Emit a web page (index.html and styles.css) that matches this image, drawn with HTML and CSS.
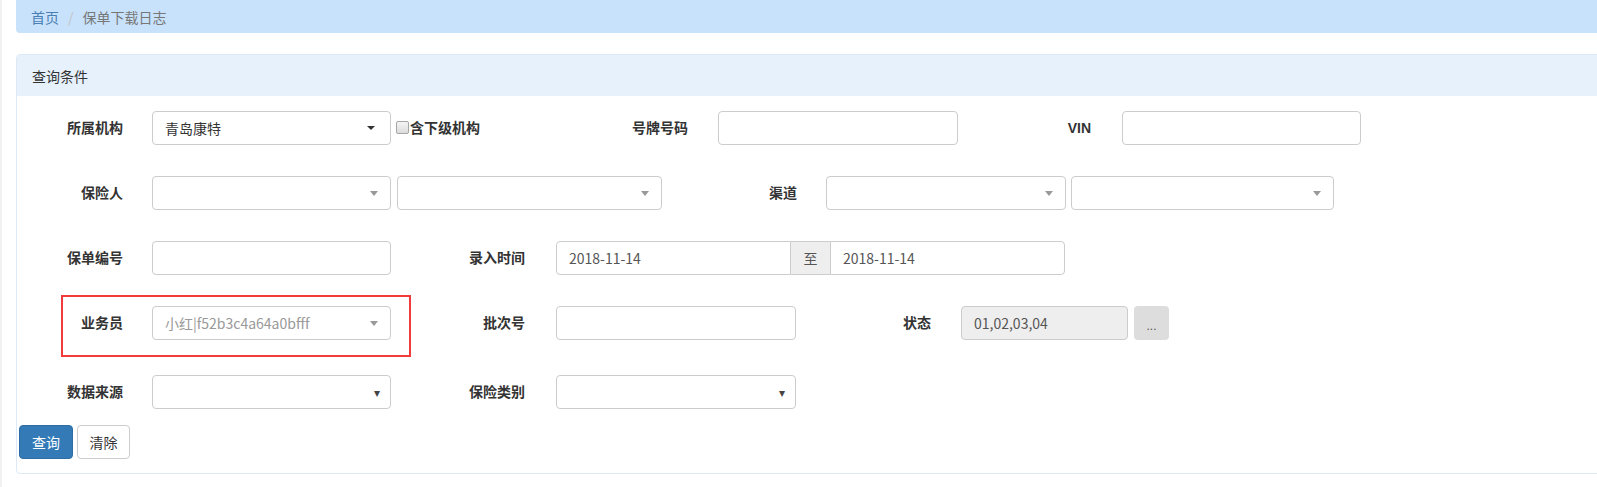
FILE: index.html
```html
<!DOCTYPE html>
<html lang="zh-CN">
<head>
<meta charset="utf-8">
<title>保单下载日志</title>
<link rel="stylesheet" href="styles.css">
</head>
<body>
<div class="page">
  <ol class="breadcrumb">
    <li class="crumb-link">首页</li>
    <li class="crumb-sep">/</li>
    <li class="crumb-active">保单下载日志</li>
  </ol>

  <div class="panel">
    <div class="panel-heading">查询条件</div>
    <div class="panel-body">

      <div class="row">
        <label class="lbl lbl-first">所属机构</label>
        <div class="ctrl sel w239"><span class="val dark-text">青岛康特</span><span class="caret caret-dark"></span></div>
        <label class="chk"><span class="chk-box"></span>含下级机构</label>
        <label class="lbl lw208 mr30">号牌号码</label>
        <input class="ctrl w240" type="text">
        <label class="lbl lw133 mr31">VIN</label>
        <input class="ctrl w239" type="text">
      </div>

      <div class="row">
        <label class="lbl lbl-first">保险人</label>
        <div class="ctrl sel w239"><span class="val"></span><span class="caret caret-gray"></span></div>
        <div class="ctrl sel w265 ml6"><span class="val"></span><span class="caret caret-gray"></span></div>
        <label class="lbl lw135 mr29">渠道</label>
        <div class="ctrl sel w240"><span class="val"></span><span class="caret caret-gray"></span></div>
        <div class="ctrl sel w263 ml5"><span class="val"></span><span class="caret caret-gray"></span></div>
      </div>

      <div class="row">
        <label class="lbl lbl-first">保单编号</label>
        <input class="ctrl w239" type="text">
        <label class="lbl lw134 mr31">录入时间</label>
        <div class="input-group">
          <input class="ctrl gi-left" type="text" value="2018-11-14">
          <span class="addon">至</span>
          <input class="ctrl gi-right" type="text" value="2018-11-14">
        </div>
      </div>

      <div class="row row-marked">
        <label class="lbl lbl-first">业务员</label>
        <div class="ctrl sel w239"><span class="val muted-text">小红|f52b3c4a64a0bfff</span><span class="caret caret-gray"></span></div>
        <label class="lbl lw134 mr31">批次号</label>
        <input class="ctrl w240" type="text">
        <label class="lbl lw135 mr30">状态</label>
        <input class="ctrl w167 readonly" type="text" value="01,02,03,04" readonly>
        <button class="dots ml6" type="button">...</button>
        <div class="mark"></div>
      </div>

      <div class="row row-last">
        <label class="lbl lbl-first">数据来源</label>
        <div class="ctrl sel w239"><span class="val"></span><span class="native-arrow">▾</span></div>
        <label class="lbl lw134 mr31">保险类别</label>
        <div class="ctrl sel w240"><span class="val"></span><span class="native-arrow">▾</span></div>
      </div>

      <div class="actions">
        <button class="btn btn-primary" type="button">查询</button>
        <button class="btn btn-default" type="button">清除</button>
      </div>

    </div>
  </div>
</div>
</body>
</html>
```
FILE: styles.css
```css
* { box-sizing: border-box; }

html, body {
  margin: 0;
  padding: 0;
  background: #ffffff;
}

body {
  font-family: "Noto Sans CJK SC", "Liberation Sans", sans-serif;
  font-size: 14px;
  color: #333333;
  line-height: 20px;
}

.page {
  border-left: 2px solid #f1f1f1;
  padding-left: 14px;
  min-height: 487px;
  overflow: hidden;
}

/* breadcrumb */
.breadcrumb {
  list-style: none;
  margin: 0;
  height: 33px;
  padding: 0 15px;
  display: flex;
  align-items: center;
  background: #c8e2fc;
  border-radius: 0 0 0 4px;
  margin-right: -40px;
}
.crumb-link { color: #4a7fb3; }
.crumb-sep { color: #c3c3c3; margin: 0 9px; }
.crumb-active { color: #777777; }

/* panel */
.panel {
  margin-top: 21px;
  margin-right: -40px;
  border: 1px solid #dde9f6;
  border-radius: 4px;
}
.panel-heading {
  height: 41px;
  background: #e6f1fc;
  display: flex;
  align-items: center;
  padding-left: 15px;
  color: #333333;
  border-radius: 3px 3px 0 0;
}
.panel-body {
  padding: 15px 0 14px 0;
}

/* rows */
.row {
  display: flex;
  align-items: center;
  height: 34px;
  margin-bottom: 31px;
  position: relative;
}
.row-marked { margin-bottom: 35px; }
.row-last { margin-bottom: 16px; }

.lbl {
  flex: none;
  text-align: right;
  font-family: "Liberation Sans", "Noto Sans CJK SC", sans-serif;
  font-weight: bold;
  color: #333333;
  white-space: nowrap;
}
.lbl-first { width: 106px; margin-right: 29px; }
.lw208 { width: 208px; }
.lw133 { width: 133px; }
.lw134 { width: 134px; }
.lw135 { width: 135px; }

.ctrl {
  flex: none;
  height: 34px;
  border: 1px solid #cccccc;
  border-radius: 4px;
  background: #ffffff;
  padding: 0 12px;
  font-family: "Noto Sans CJK SC", "Liberation Sans", sans-serif;
  font-size: 14px;
  color: #555555;
  outline: none;
  margin: 0;
}
.w167 { width: 167px; }
.w239 { width: 239px; }
.w240 { width: 240px; }
.w263 { width: 263px; }
.w265 { width: 265px; }

/* spacing utilities (after .ctrl so they win) */
.mr29 { margin-right: 29px; }
.mr30 { margin-right: 30px; }
.mr31 { margin-right: 31px; }
.ml5 { margin-left: 5px; }
.ml6 { margin-left: 6px; }

.sel {
  display: flex;
  align-items: center;
  justify-content: space-between;
  padding-right: 14px;
}
.val { white-space: nowrap; }
.dark-text { color: #333333; }
.muted-text { color: #999999; }

.caret {
  width: 0;
  height: 0;
  border-left: 4px solid transparent;
  border-right: 4px solid transparent;
}
.caret-dark { border-top: 4px solid #333333; margin-right: 1px; }
.caret-gray { border-top: 5px solid #999999; margin-right: -2px; }

.native-arrow {
  font-size: 12px;
  color: #444444;
  margin-right: -4px;
  line-height: 1;
}

/* checkbox */
.chk {
  flex: none;
  width: 84px;
  margin-left: 5px;
  align-self: flex-start;
  margin-top: 6px;
  display: flex;
  align-items: center;
  font-weight: bold;
  color: #333333;
  white-space: nowrap;
}
.chk-box {
  width: 13px;
  height: 13px;
  border: 1px solid #a6a6a6;
  border-radius: 2px;
  background: linear-gradient(#f4f4f4, #dcdcdc);
  margin-right: 1px;
  flex: none;
}

/* input group */
.input-group {
  display: flex;
  width: 509px;
  flex: none;
}
.gi-left {
  width: 235px;
  border-radius: 4px 0 0 4px;
}
.gi-right {
  width: 235px;
  border-radius: 0 4px 4px 0;
}
.addon {
  width: 39px;
  height: 34px;
  flex: none;
  background: #eeeeee;
  border-top: 1px solid #cccccc;
  border-bottom: 1px solid #cccccc;
  display: flex;
  align-items: center;
  justify-content: center;
  color: #555555;
}

.readonly { background: #eeeeee; }

.dots {
  flex: none;
  width: 35px;
  height: 34px;
  border: none;
  border-radius: 4px;
  background: #dddddd;
  color: #555555;
  font-family: "Liberation Sans", sans-serif;
  font-size: 12px;
  padding: 6px 0 0 0;
}

/* red annotation box */
.mark {
  position: absolute;
  left: 44px;
  top: -11px;
  width: 350px;
  height: 62px;
  border: 2px solid #f23b3b;
  pointer-events: none;
}

/* buttons */
.actions {
  display: flex;
  align-items: flex-start;
  margin-left: 2px;
}
.btn {
  flex: none;
  height: 34px;
  border-radius: 4px;
  padding: 0;
  font-family: "Noto Sans CJK SC", "Liberation Sans", sans-serif;
  font-size: 14px;
  line-height: 20px;
  white-space: nowrap;
  text-align: center;
  margin: 0 4px 0 0;
}
.btn-primary {
  width: 54px;
  background: #337ab7;
  border: 1px solid #2e6da4;
  color: #ffffff;
}
.btn-default {
  width: 53px;
  background: #ffffff;
  border: 1px solid #cccccc;
  color: #333333;
}
```
